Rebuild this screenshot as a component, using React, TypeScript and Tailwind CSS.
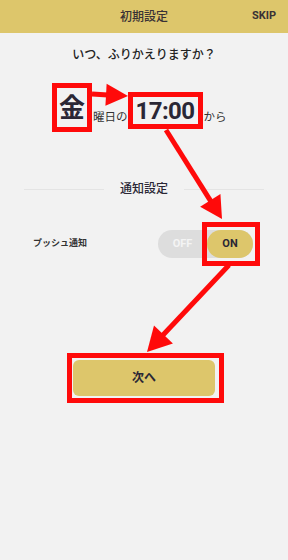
import React from 'react';

const FONT = { fontFamily: 'Roboto, "Noto Sans CJK JP", sans-serif' };

// red annotation arrow: tail -> tip, drawn as shaft + triangle head
function Arrow({ x1, y1, x2, y2, len = 20, half = 11 }: { x1: number; y1: number; x2: number; y2: number; len?: number; half?: number }) {
  const dx = x2 - x1;
  const dy = y2 - y1;
  const d = Math.hypot(dx, dy);
  const ux = dx / d;
  const uy = dy / d;
  const bx = x2 - ux * len;
  const by = y2 - uy * len;
  const nx = -uy * half;
  const ny = ux * half;
  return (
    <g>
      <line x1={x1} y1={y1} x2={bx + ux * 2} y2={by + uy * 2} stroke="#ff0a0a" strokeWidth={5} />
      <polygon points={`${x2},${y2} ${bx + nx},${by + ny} ${bx - nx},${by - ny}`} fill="#ff0a0a" />
    </g>
  );
}

export default function App() {
  return (
    <div className="relative w-[288px] h-[560px] bg-[#f2f2f2] overflow-hidden text-[#2b2833]" style={FONT}>
      {/* Header */}
      <div className="relative h-[33px] bg-[#ddc66b] flex items-center justify-center">
        <span className="text-[12px] font-medium text-[#3a3235]">初期設定</span>
        <span className="absolute right-[12px] text-[11px] font-bold text-[#3a3235]">SKIP</span>
      </div>

      {/* Question */}
      <p className="mt-[14px] text-center text-[12px] leading-4 font-medium text-[#222]">いつ、ふりかえりますか？</p>

      {/* Day / time */}
      <div className="mt-[20px] flex items-end pl-[52px]">
        <span className="w-[40px] h-[49px] border-[5px] border-[#ff0a0a] flex items-center justify-center text-[26px] font-bold leading-none text-[#2a2735]">
          金
        </span>
        <span className="mb-[9px] ml-[1px] text-[11.5px] leading-3 text-[#333]">曜日の</span>
        <span className="mb-[3px] w-[75px] h-[37px] border-[5px] border-[#ff0a0a] flex items-center justify-center text-[24px] font-bold leading-none tracking-tight text-[#2a2735]">
          17:00
        </span>
        <span className="mb-[9px] ml-[1px] text-[11.5px] leading-3 text-[#333]">から</span>
      </div>

      {/* Section divider */}
      <div className="mt-[49px] mx-[24px] flex items-center gap-[16px]">
        <div className="flex-1 h-px bg-[#e4e4e4]" />
        <span className="text-[12px] leading-4 font-medium text-[#2a2735]">通知設定</span>
        <div className="flex-1 h-px bg-[#e4e4e4]" />
      </div>

      {/* Push toggle */}
      <div className="mt-[33px] flex items-center justify-between pl-[33px] pr-[35px]">
        <span className="text-[9px] font-bold text-[#333]">プッシュ通知</span>
        <div className="relative w-[95px] h-[28px] rounded-full bg-[#dddddd] flex items-center">
          <span className="w-[49px] text-center text-[11px] font-bold text-[#f4f4f4]">OFF</span>
          <span className="w-[46px] h-full rounded-full bg-[#ddc66b] flex items-center justify-center text-[11px] font-bold text-[#2a2735]">
            ON
          </span>
          <div className="absolute left-[44px] top-[-8px] w-[58px] h-[44px] border-[5px] border-[#ff0a0a]" />
        </div>
      </div>

      {/* Next button */}
      <div className="relative mt-[102px] ml-[73px] w-[142px]">
        <button className="w-full h-[36px] rounded-md bg-[#ddc66b] text-[12px] font-bold text-[#2a2735]">次へ</button>
        <div className="absolute left-[-6px] top-[-7px] w-[157px] h-[50px] border-[5px] border-[#ff0a0a]" />
      </div>

      {/* Annotation arrows */}
      <svg className="absolute inset-0 pointer-events-none" width={288} height={560}>
        <Arrow x1={92} y1={94} x2={128} y2={96} len={22} half={11} />
        <Arrow x1={166} y1={130} x2={222} y2={219} len={22} half={12} />
        <Arrow x1={229} y1={265} x2={147} y2={352} len={24} half={13} />
      </svg>
    </div>
  );
}
